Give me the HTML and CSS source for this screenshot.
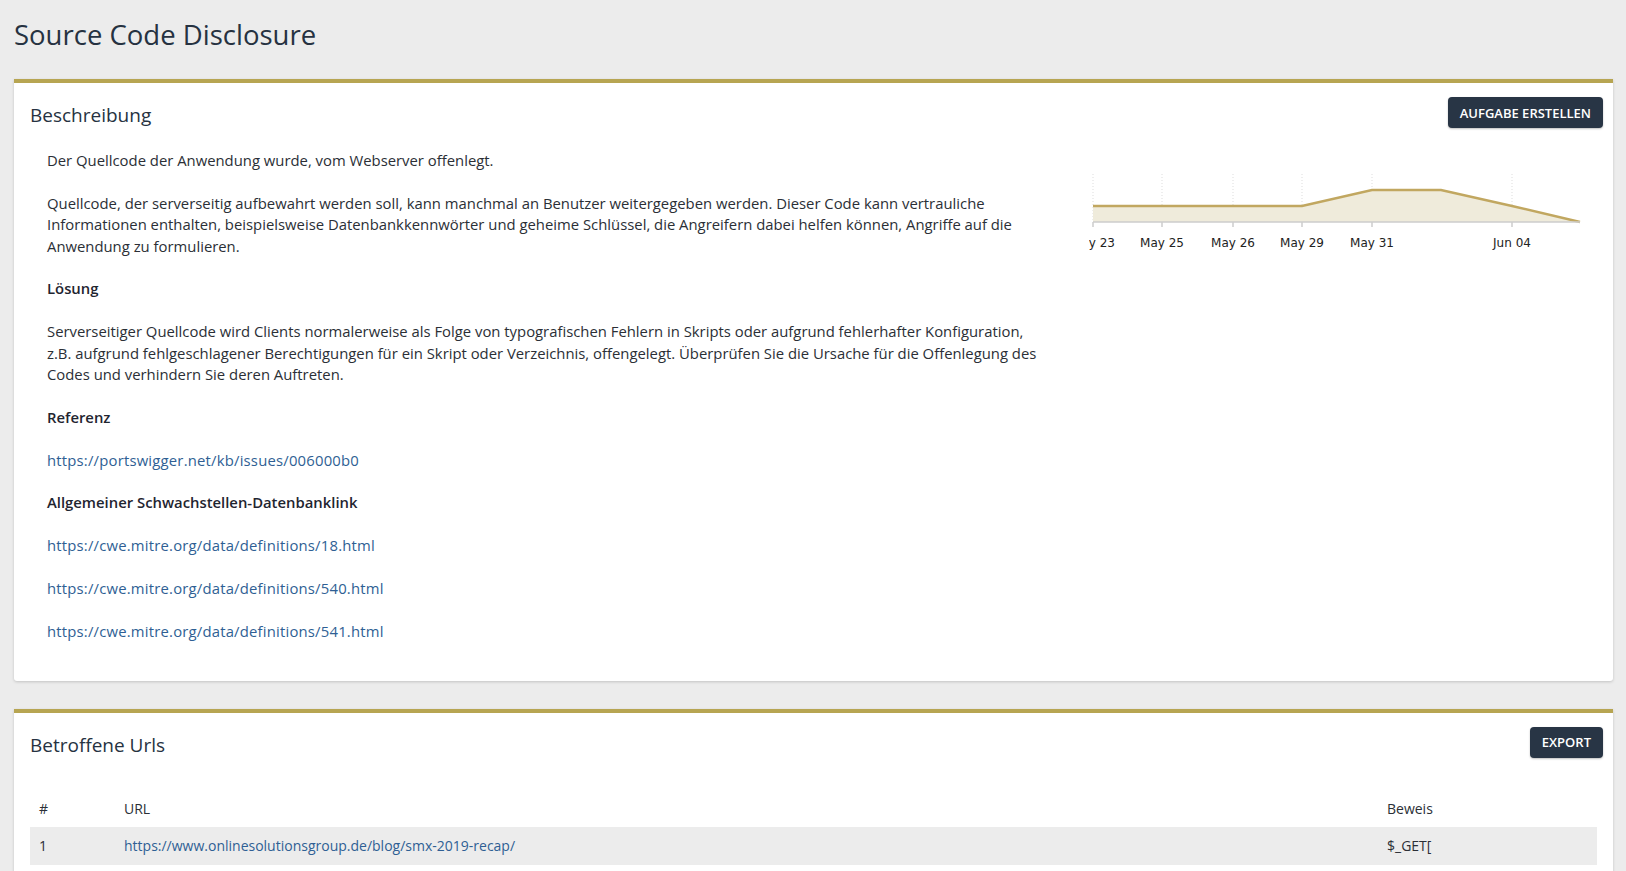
FILE: index.html
```html
<!DOCTYPE html>
<html lang="de">
<head>
    <meta charset="UTF-8" />
    <meta name="viewport" content="width=device-width, initial-scale=1.0"/>
    <title>Source Code Disclosure</title>

    <link rel="stylesheet" href="styles.css">
</head>
<body>
    <h1 class="page-title">Source Code Disclosure</h1>

    <div class="card">
        <div class="card-head">
            <h3>Beschreibung</h3>
            <button class="btn">Aufgabe erstellen</button>
        </div>

        <div class="row">
            <div class="col-text">
                <p>Der Quellcode der Anwendung wurde, vom Webserver offenlegt.</p>
                <p>Quellcode, der serverseitig aufbewahrt werden soll, kann manchmal an Benutzer weitergegeben werden. Dieser Code kann vertrauliche Informationen enthalten, beispielsweise Datenbankkennwörter und geheime Schlüssel, die Angreifern dabei helfen können, Angriffe auf die Anwendung zu formulieren.</p>
                <p><strong>Lösung</strong></p>
                <p>Serverseitiger Quellcode wird Clients normalerweise als Folge von typografischen Fehlern in Skripts oder aufgrund fehlerhafter Konfiguration, z.B. aufgrund fehlgeschlagener Berechtigungen für ein Skript oder Verzeichnis, offengelegt. Überprüfen Sie die Ursache für die Offenlegung des Codes und verhindern Sie deren Auftreten.</p>
                <p><strong>Referenz</strong></p>
                <p><a href="#">https://portswigger.net/kb/issues/006000b0</a></p>
                <p><strong>Allgemeiner Schwachstellen-Datenbanklink</strong></p>
                <p><a href="#">https://cwe.mitre.org/data/definitions/18.html</a></p>
                <p><a href="#">https://cwe.mitre.org/data/definitions/540.html</a></p>
                <p><a href="#">https://cwe.mitre.org/data/definitions/541.html</a></p>
            </div>

            <div class="col-chart">
                <svg class="chart" width="495" height="90" viewBox="0 0 495 90">
                    <g class="grid">
                        <line x1="4" y1="8" x2="4" y2="56"/>
                        <line x1="73" y1="8" x2="73" y2="56"/>
                        <line x1="144" y1="8" x2="144" y2="56"/>
                        <line x1="213" y1="8" x2="213" y2="56"/>
                        <line x1="283" y1="8" x2="283" y2="56"/>
                        <line x1="423" y1="8" x2="423" y2="56"/>
                    </g>
                    <polygon class="area" points="4,56 4,40 73,40 144,40 213,40 283,24 352,24 423,40 491,56"/>
                    <polyline class="line" points="4,40 73,40 144,40 213,40 283,24 352,24 423,40 491,56"/>
                    <line class="axis" x1="4" y1="56" x2="491" y2="56"/>
                    <g class="ticks">
                        <line x1="4" y1="56" x2="4" y2="61"/>
                        <line x1="73" y1="56" x2="73" y2="61"/>
                        <line x1="144" y1="56" x2="144" y2="61"/>
                        <line x1="213" y1="56" x2="213" y2="61"/>
                        <line x1="283" y1="56" x2="283" y2="61"/>
                        <line x1="423" y1="56" x2="423" y2="61"/>
                    </g>
                    <g class="labels">
                        <text x="4" y="81">May 23</text>
                        <text x="73" y="81">May 25</text>
                        <text x="144" y="81">May 26</text>
                        <text x="213" y="81">May 29</text>
                        <text x="283" y="81">May 31</text>
                        <text x="423" y="81">Jun 04</text>
                    </g>
                </svg>
            </div>
        </div>
    </div>

    <div class="card">
        <div class="card-head">
            <h3>Betroffene Urls</h3>
            <button class="btn">Export</button>
        </div>

        <table class="urls">
            <thead>
                <tr>
                    <th class="num">#</th>
                    <th>URL</th>
                    <th class="proof">Beweis</th>
                </tr>
            </thead>
            <tbody>
                <tr>
                    <td class="num">1</td>
                    <td><a href="#">https://www.onlinesolutionsgroup.de/blog/smx-2019-recap/</a></td>
                    <td class="proof">$_GET[</td>
                </tr>
            </tbody>
        </table>
    </div>
</body>
</html>
```

FILE: styles.css
```css
body {
    margin: 0;
    padding: 0 13px 40px 14px;
    background: #ececec;
    color: #2b2f36;
    font-family: "Open Sans", sans-serif;
    font-size: 14.85px;
    line-height: 21.4px;
    overflow: hidden;
}

.page-title {
    margin: 18px 0 28px;
    font-size: 27.5px;
    line-height: 33px;
    font-weight: 400;
    color: #263241;
}

.card {
    background: #fff;
    border-top: 4px solid #b7a552;
    border-radius: 0 0 3px 3px;
    box-shadow: 0 1px 3px rgba(0, 0, 0, 0.18);
    padding: 14px 10px 17px 16px;
    margin-bottom: 28px;
}

.card-head {
    display: flex;
    justify-content: space-between;
    align-items: center;
}

.card-head h3 {
    margin: 7px 0 0;
    font-size: 19px;
    font-weight: 400;
    color: #263241;
}

.btn {
    background: #283545;
    color: #fff;
    border: none;
    border-radius: 4px;
    padding: 0 12px;
    height: 31px;
    font-family: inherit;
    font-size: 13px;
    font-weight: 600;
    text-transform: uppercase;
    box-shadow: 0 1px 2px rgba(0, 0, 0, 0.25);
    cursor: pointer;
}

.row {
    display: flex;
    margin-top: 22px;
}

.col-text {
    width: 990px;
    padding-left: 17px;
}

.col-text p {
    margin: 0 0 21.4px;
}

.col-text strong {
    font-weight: 600;
    color: #1f2530;
}

a {
    color: #2f5f94;
    text-decoration: none;
}

.col-text a {
    letter-spacing: 0.2px;
}

.col-chart {
    padding-left: 52px;
    padding-top: 16px;
}

.chart {
    display: block;
    overflow: hidden;
}

.grid line {
    stroke: #ddd;
    stroke-width: 1;
    stroke-dasharray: 1 2;
}

.area {
    fill: #efebdb;
}

.line {
    fill: none;
    stroke: #c1a760;
    stroke-width: 2.5;
}

.axis, .ticks line {
    stroke: #ccc;
    stroke-width: 1.5;
}

.labels text {
    font-family: "DejaVu Sans", Verdana, sans-serif;
    font-size: 12px;
    fill: #222;
    text-anchor: middle;
}

.urls {
    width: calc(100% - 6px);
    margin-top: 30px;
    border-collapse: collapse;
    font-size: 14px;
}

.urls th, .urls td {
    text-align: left;
    font-weight: 400;
    padding: 8px 8px 9px 9px;
}

.urls th {
    padding-top: 10px;
    padding-bottom: 8px;
}

.urls tbody tr {
    background: #ececec;
}

.urls .num {
    width: 68px;
}

.urls .proof {
    width: 202px;
}
```
